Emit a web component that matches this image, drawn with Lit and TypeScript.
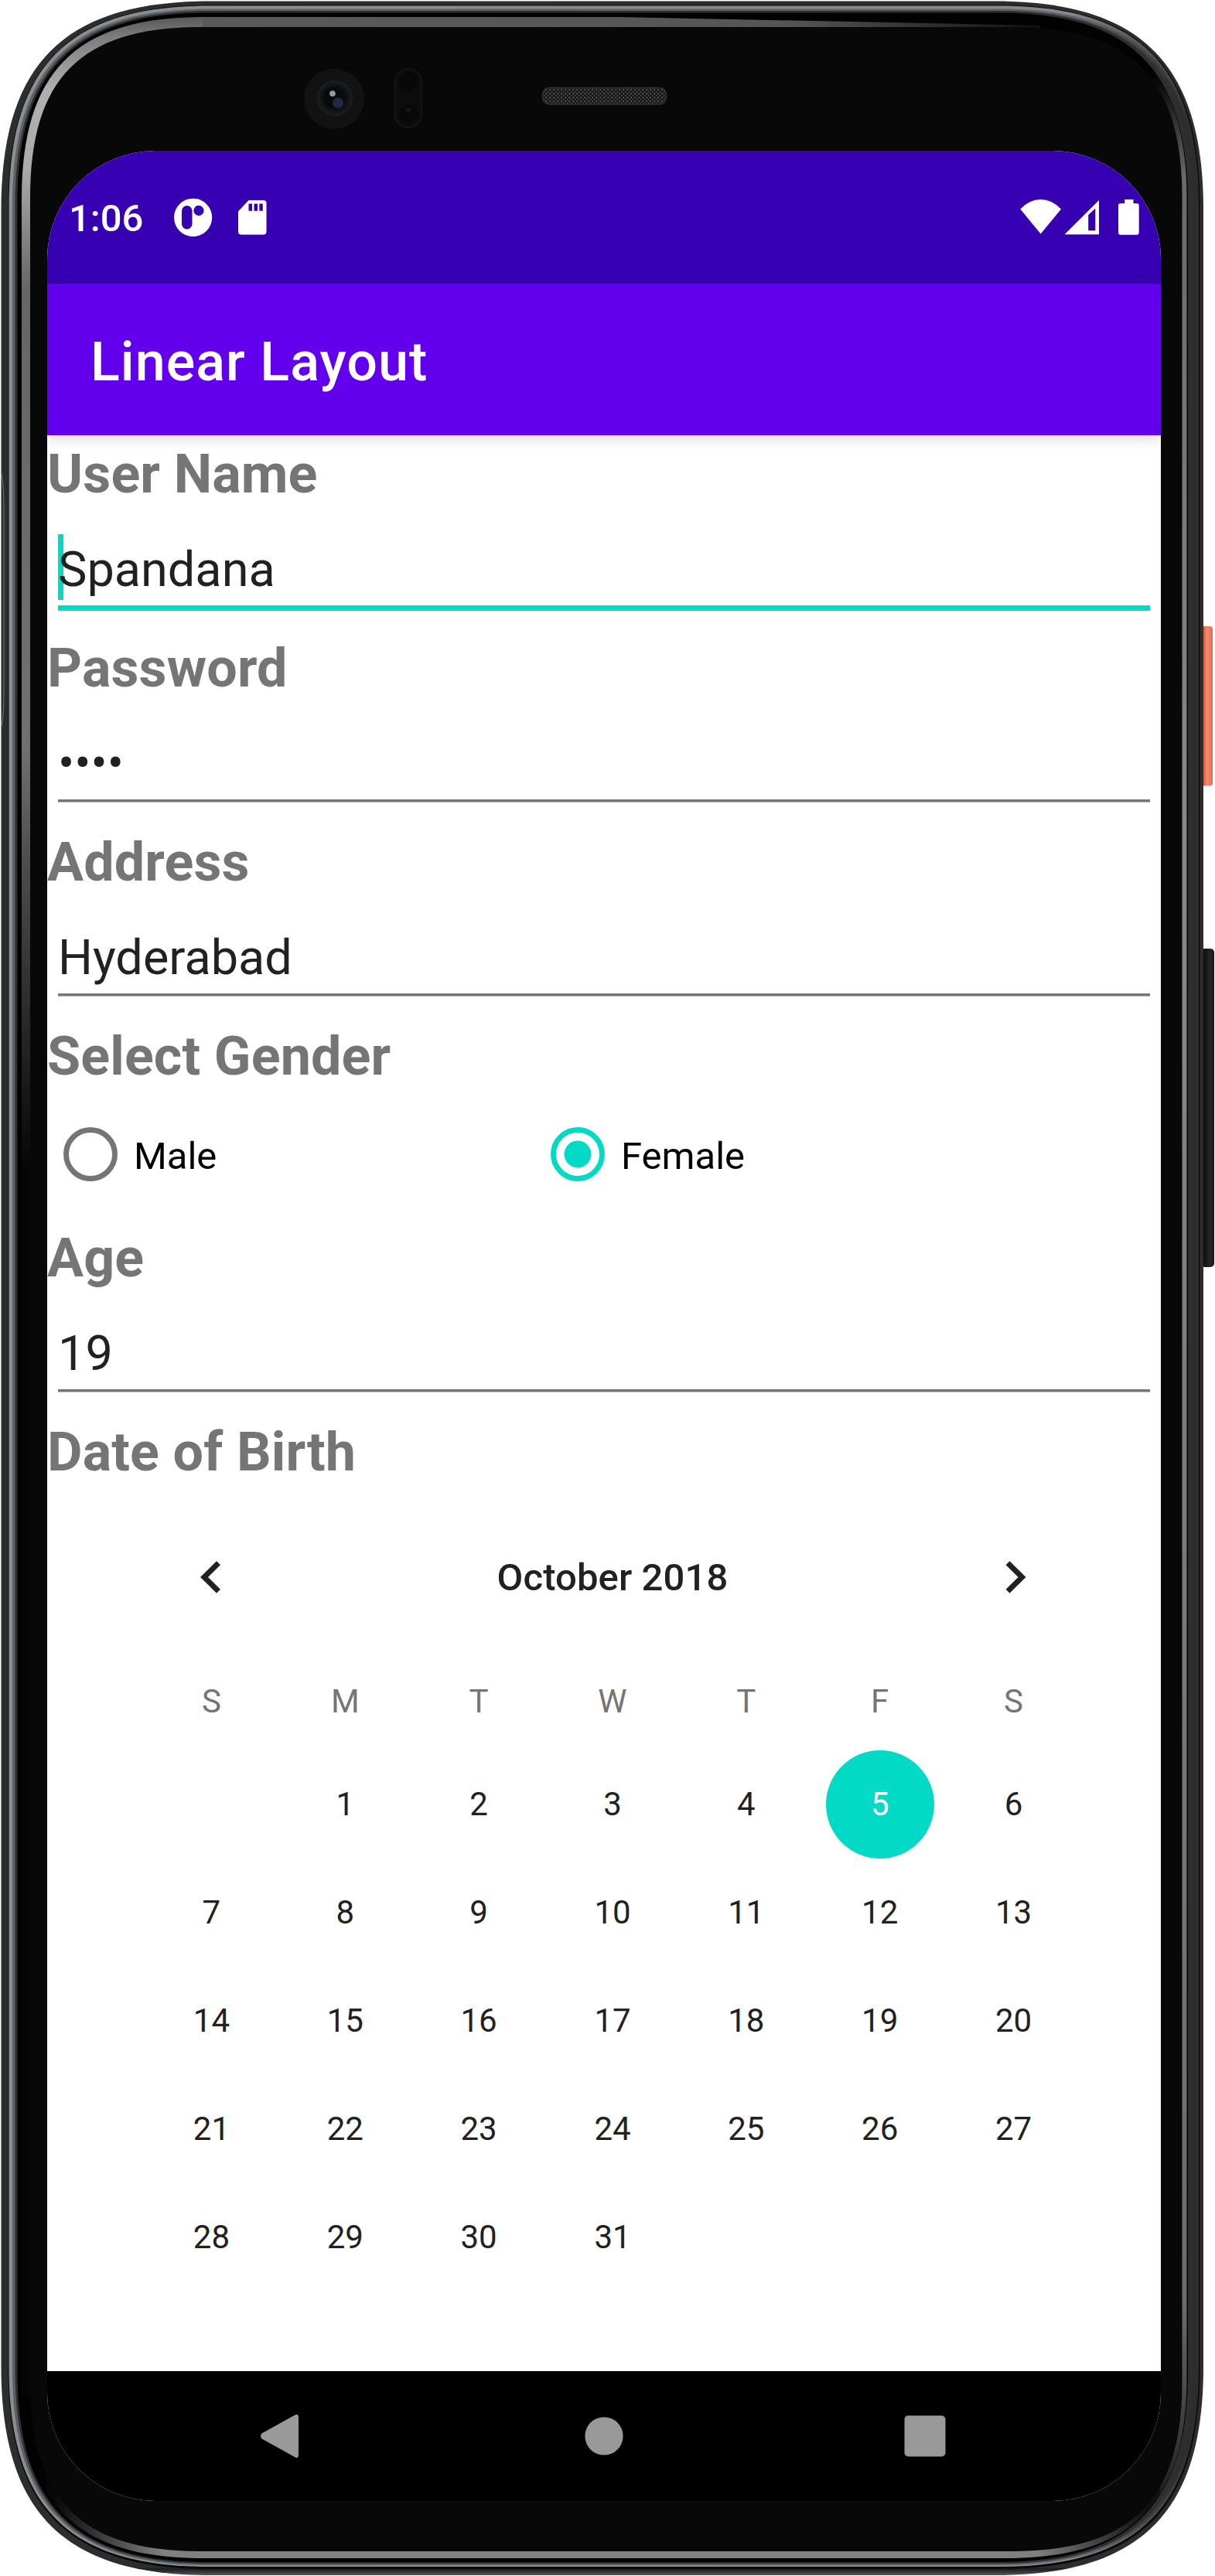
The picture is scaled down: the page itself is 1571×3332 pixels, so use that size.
import { LitElement, html, css, svg } from "lit";
import { customElement, property } from "lit/decorators.js";
import { classMap } from "lit/directives/class-map.js";

/** Closed outline with soft, continuously curved corners of length l. */
function softRect(x0: number, y0: number, x1: number, y1: number, l: number): string {
  const c = l * 0.3;
  return (
    `M${x0} ${y0 + l}C${x0} ${y0 + c} ${x0 + c} ${y0} ${x0 + l} ${y0}` +
    `H${x1 - l}C${x1 - c} ${y0} ${x1} ${y0 + c} ${x1} ${y0 + l}` +
    `V${y1 - l}C${x1} ${y1 - c} ${x1 - c} ${y1} ${x1 - l} ${y1}` +
    `H${x0 + l}C${x0 + c} ${y1} ${x0} ${y1 - c} ${x0} ${y1 - l}Z`
  );
}

@customElement("device-frame")
class DeviceFrame extends LitElement {
  static styles = css`
    :host { display: block; }
    svg { display: block; }
  `;
  render() {
    const glass = softRect(28, 22, 1534.5, 3309, 235);
    return html`<svg width="1571" height="3332" viewBox="0 0 1571 3332">
      <defs>
        <linearGradient id="body" x1="0" y1="3321" x2="0" y2="3331" gradientUnits="userSpaceOnUse">
          <stop offset="0" stop-color="#2c2d2d" /><stop offset="0.2" stop-color="#1c1c1c" /><stop offset="1" stop-color="#585858" />
        </linearGradient>
        <linearGradient id="rim" x1="0" y1="0" x2="1571" y2="0" gradientUnits="userSpaceOnUse">
          <stop offset="0" stop-color="#8b8e93" /><stop offset="0.88" stop-color="#85878c" />
          <stop offset="0.95" stop-color="#4a4c4f" /><stop offset="0.98" stop-color="#2b2d2f" />
        </linearGradient>
        <linearGradient id="rim2" x1="0" y1="0" x2="1571" y2="0" gradientUnits="userSpaceOnUse">
          <stop offset="0" stop-color="#5d6064" /><stop offset="0.9" stop-color="#5d6064" /><stop offset="0.97" stop-color="#2b2d2f" />
        </linearGradient>
        <linearGradient id="hl" x1="0" y1="0" x2="0" y2="1560" gradientUnits="userSpaceOnUse">
          <stop offset="0.014" stop-color="#585858" /><stop offset="0.03" stop-color="#7c7c7c" /><stop offset="0.075" stop-color="#b0b0b0" />
          <stop offset="0.14" stop-color="#aaa" /><stop offset="0.24" stop-color="#666" /><stop offset="0.62" stop-color="#707070" />
          <stop offset="0.72" stop-color="#4c4c4c" /><stop offset="0.97" stop-color="#060606" />
        </linearGradient>
        <linearGradient id="ht" x1="260" y1="0" x2="1345" y2="0" gradientUnits="userSpaceOnUse">
          <stop offset="0" stop-color="#5a5a5a" /><stop offset="0.7" stop-color="#555" /><stop offset="1" stop-color="#111" />
        </linearGradient>
        <linearGradient id="hr" x1="0" y1="100" x2="0" y2="3300" gradientUnits="userSpaceOnUse">
          <stop offset="0" stop-color="#050505" /><stop offset="0.04" stop-color="#6a6a6a" /><stop offset="0.3" stop-color="#888" />
          <stop offset="0.9" stop-color="#6c6c6c" /><stop offset="0.96" stop-color="#333" /><stop offset="0.985" stop-color="#111" />
        </linearGradient>
        <linearGradient id="hb" x1="70" y1="0" x2="1480" y2="0" gradientUnits="userSpaceOnUse">
          <stop offset="0" stop-color="#070708" /><stop offset="0.1" stop-color="#808080" /><stop offset="0.9" stop-color="#808080" />
          <stop offset="1" stop-color="#111" />
        </linearGradient>
        <linearGradient id="power" x1="1556" y1="0" x2="1568" y2="0" gradientUnits="userSpaceOnUse">
          <stop offset="0" stop-color="#d9573c" /><stop offset="0.35" stop-color="#f08a70" /><stop offset="0.7" stop-color="#ee7d62" /><stop offset="1" stop-color="#e2654a" />
        </linearGradient>
        <linearGradient id="volume" x1="1556" y1="0" x2="1570" y2="0" gradientUnits="userSpaceOnUse">
          <stop offset="0" stop-color="#0d0d0d" /><stop offset="0.6" stop-color="#262626" /><stop offset="1" stop-color="#151515" />
        </linearGradient>
        <radialGradient id="lens"><stop offset="0" stop-color="#07080c" /><stop offset="0.6" stop-color="#0b0c10" /><stop offset="1" stop-color="#1f1f20" /></radialGradient>
        <pattern id="mesh" width="5" height="5" patternUnits="userSpaceOnUse">
          <rect width="5" height="5" fill="#161616" /><circle cx="1.2" cy="1.2" r="1.1" fill="#5a5a5a" /><circle cx="3.7" cy="3.7" r="1.1" fill="#484848" />
        </pattern>
        <clipPath id="cl"><path d="M0 0H262V3100H0Z" /></clipPath>
        <clipPath id="ctt"><path d="M262 20H700L1345 33V60H262Z" /></clipPath>
        <clipPath id="cr"><path d="M1345 100H1571V3236H1345Z" /></clipPath>
        <clipPath id="cb"><path d="M60 3200H1500V3332H60Z" /></clipPath>
      </defs>
      <rect x="1553" y="810" width="15" height="206.5" rx="4" fill="url(#power)" />
      <rect x="1553" y="1227" width="17" height="412" rx="5" fill="url(#volume)" />
      <path d=${softRect(1.5, 1.5, 1556, 3331, 270)} fill="url(#body)" />
      <path d=${softRect(10.5, 6.5, 1551.5, 3323, 260)} fill="#0a0a0a" />
      <path d=${softRect(11.5, 7.5, 1550, 3320, 258)} fill="url(#rim)" />
      <path d=${softRect(16, 11.5, 1546, 3318, 253)} fill="url(#rim2)" />
      <path d=${softRect(19.5, 14, 1542, 3316, 250)} fill="#2d2f31" />
      <path d=${softRect(22.5, 16.5, 1536, 3314, 246)} fill="#020202" />
      <g clip-path="url(#cl)"><path d=${glass} fill="url(#hl)" /></g>
      <g clip-path="url(#ctt)"><path d=${glass} fill="url(#ht)" /></g>
      <g clip-path="url(#cr)"><path d=${glass} fill="url(#hr)" /></g>
      <g clip-path="url(#cb)"><path d=${glass} fill="url(#hb)" /></g>
      <path d=${softRect(39, 35, 1528.5, 3300, 220)} fill="#080809" />
      <path d="M2 612Q5 630 5 660V890Q5 925 2 940" fill="none" stroke="#77797b" stroke-width="1" />
      <circle cx="432" cy="128" r="39" fill="#111213" />
      <circle cx="433" cy="127" r="23" fill="url(#lens)" />
      <circle cx="432" cy="126" r="13" fill="#08090d" />
      <circle cx="437" cy="133" r="7" fill="#1f2845" />
      <circle cx="430" cy="121" r="3.8" fill="#9a9a9f" />
      <rect x="511" y="89" width="34" height="76" rx="17" fill="#0c0c0d" stroke="#141415" stroke-width="2" />
      <circle cx="528" cy="105" r="12" fill="#080809" /><circle cx="528" cy="147" r="12" fill="#080809" />
      <circle cx="528" cy="143" r="3.5" fill="#151516" />
      <rect x="701.5" y="113.5" width="160" height="21.5" rx="9" fill="url(#mesh)" stroke="#303030" stroke-width="1.5" />
    </svg>`;
  }
}

@customElement("status-bar")
class StatusBar extends LitElement {
  static styles = css`
    :host {
      display: flex; align-items: center; justify-content: space-between; box-sizing: border-box;
      height: 172px; padding: 0 28px 0 28px; background: #3700b3; color: #fff;
      font: 500 49px/172px Roboto, sans-serif;
    }
    .side { display: flex; align-items: center; height: 172px; }
    .time { width: 136px; padding-top: 4px; }
    svg { display: block; fill: #fff; }
  `;
  render() {
    return html`<div class="side">
        <span class="time">1:06</span>
        <svg width="120" height="50" viewBox="225 256 120 50">
          <circle cx="249.6" cy="281.3" r="24.6" />
          <rect x="235" y="266" width="13.5" height="30.6" rx="6.75" fill="#3700b3" />
          <circle cx="257" cy="272.3" r="6.6" fill="#3700b3" />
          <path fill-rule="evenodd" d="M321.5 259H340.5A4 4 0 0 1 344.5 263V299.500A4 4 0 0 1 340.500 303.500H312A4 4 0 0 1 308 299.500V273.500ZM321.500 263.600V272.800H326V263.600ZM328.500 263.600V272.800H333V263.600ZM335.300 263.600V272.800H339.800V263.600Z" />
        </svg>
      </div>
      <div class="side">
        <svg width="154" height="50" viewBox="1319 256 154 50">
          <path d="M1319.300 270.500Q1331 258 1345.600 258T1372 270.500L1345.600 302.500Z" />
          <path fill-rule="evenodd" d="M1376.500 303.200L1421 259V303.200ZM1407.200 278V298.300H1416.300V269.500Z" />
          <path d="M1454.200 258H1465.500V263H1469.700A3 3 0 0 1 1472.700 266V300.800A3 3 0 0 1 1469.700 303.800H1449A3 3 0 0 1 1446 300.800V266A3 3 0 0 1 1449 263H1454.200Z" />
        </svg>
      </div>`;
  }
}

@customElement("text-field")
class TextField extends LitElement {
  @property() label = "";
  @property() value = "";
  @property({ type: Boolean }) focused = false;
  static styles = css`
    :host { display: block; font-family: Roboto, sans-serif; }
    .label { height: 93px; font-size: 70px; font-weight: 700; line-height: 100px; letter-spacing: 0.15px; color: #757575; }
    .edit { height: 158px; padding: 0 14px; box-sizing: border-box; }
    .value { position: relative; height: 127px; font-size: 63px; line-height: 161px; color: #212121; }
    .text { position: relative; }
    .line { height: 4px; background: linear-gradient(#757575 3px, #b5b5b5 3px); }
    .line.on { height: 7px; background: #03dac5; }
    .cursor { position: absolute; left: 0; top: 35px; width: 7px; height: 85px; background: #03dac5; }
  `;
  render() {
    return html`<div class="label">${this.label}</div>
      <div class="edit">
        <div class="value">
          ${this.focused ? html`<div class="cursor"></div>` : ""}
          <span class="text">${this.value}</span>
        </div>
        <div class=${classMap({ line: true, on: this.focused })}></div>
      </div>`;
  }
}

@customElement("gender-picker")
class GenderPicker extends LitElement {
  static styles = css`
    :host { display: block; font-family: Roboto, sans-serif; }
    .label { height: 93px; font-size: 70px; font-weight: 700; line-height: 100px; letter-spacing: 0.15px; color: #757575; }
    .row { display: flex; height: 168px; }
    .option { display: flex; align-items: center; width: 630px; font-size: 49px; line-height: 57px; color: #000; }
    .option span { padding-top: 4px; }
    svg { display: block; width: 112px; height: 112px; fill: none; stroke: #757575; stroke-width: 7; }
    svg.on { stroke: #03dac5; }
    .dot { fill: #03dac5; stroke: none; }
  `;
  private option(name: string, on: boolean) {
    return html`<div class="option">
      <svg class=${classMap({ on })} viewBox="0 0 112 112">
        <circle cx="56" cy="56" r="31.500" />
        ${on ? svg`<circle class="dot" cx="56" cy="56" r="17.5" />` : ""}
      </svg>
      <span>${name}</span>
    </div>`;
  }
  render() {
    return html`<div class="label">Select Gender</div>
      <div class="row">${this.option("Male", false)}${this.option("Female", true)}</div>`;
  }
}

@customElement("month-calendar")
class MonthCalendar extends LitElement {
  static styles = css`
    :host { display: block; width: 1210px; margin-left: 126px; font-family: Roboto, sans-serif; color: #212121; }
    .head { display: grid; grid-template-columns: 169px 1fr 169px; align-items: center; justify-items: center; height: 238px; }
    .title { font-size: 49px; font-weight: 500; line-height: 57px; letter-spacing: 0.1px; }
    svg { display: block; width: 28px; height: 42px; fill: none; stroke: #212121; stroke-width: 7; }
    .week, .days { display: grid; grid-template-columns: repeat(7, 1fr); justify-items: center; text-align: center; font-size: 42px; }
    .week { height: 105px; line-height: 83px; color: #757575; }
    .days { grid-auto-rows: 140px; line-height: 140px; }
    .day { width: 140px; height: 140px; border-radius: 50%; }
    .day.on { background: #03dac5; color: #fff; }
    .day.first { grid-column: 2; }
  `;
  render() {
    const days = Array.from({ length: 31 }, (_, i) => i + 1);
    return html`<div class="head">
        <svg viewBox="0 0 28 42"><path d="M24.500 2.800L6 21L24.500 39.200" /></svg>
        <div class="title">October 2018</div>
        <svg viewBox="0 0 28 42"><path d="M4 2.800L22.500 21L4 39.200" /></svg>
      </div>
      <div class="week">${["S", "M", "T", "W", "T", "F", "S"].map((d) => html`<span>${d}</span>`)}</div>
      <div class="days">
        ${days.map((d) => html`<div class=${classMap({ day: true, on: d === 5, first: d === 1 })}>${d}</div>`)}
      </div>`;
  }
}

@customElement("nav-bar")
class NavBar extends LitElement {
  static styles = css`
    :host { display: block; height: 168px; background: #000; }
    svg { display: block; fill: #999; }
  `;
  render() {
    return html`<svg width="1440" height="168" viewBox="61 3067 1440 168">
      <path d="M380 3124.500Q386 3120.500 386 3127V3175Q386 3181.500 380 3177.500L338.500 3154.500Q335.500 3151 338.500 3147.500Z" />
      <circle cx="781" cy="3151" r="24.600" />
      <rect x="1169.500" y="3124.500" width="53" height="53" rx="5" />
    </svg>`;
  }
}

@customElement("app-root")
class AppRoot extends LitElement {
  static styles = css`
    :host {
      display: block; position: relative; box-sizing: border-box; width: 1571px; height: 3332px;
      padding: 195px 70px 97px 61px; background: #fff; font-family: Roboto, sans-serif; overflow: hidden;
    }
    .frame { position: absolute; left: 0; top: 0; }
    .screen { position: relative; display: flex; flex-direction: column; width: 1440px; height: 3040px; border-radius: 140px; overflow: hidden; background: #fff; }
    .appbar { flex: none; height: 196px; box-sizing: border-box; padding: 0 56px; background: #6200ee; color: #fff; font-size: 70px; font-weight: 500; line-height: 202px; letter-spacing: 1.05px; box-shadow: 0 4px 16px rgba(0, 0, 0, 0.16); }
    .content { flex: 1; min-height: 0; }
    .label { height: 93px; font-size: 70px; font-weight: 700; line-height: 100px; letter-spacing: 0.15px; color: #757575; }
  `;
  render() {
    return html`<device-frame class="frame"></device-frame>
      <div class="screen">
        <status-bar></status-bar>
        <div class="appbar">Linear Layout</div>
        <div class="content">
          <text-field label="User Name" value="Spandana" focused></text-field>
          <text-field label="Password" value="••••"></text-field>
          <text-field label="Address" value="Hyderabad"></text-field>
          <gender-picker></gender-picker>
          <text-field label="Age" value="19"></text-field>
          <div class="label">Date of Birth</div>
          <month-calendar></month-calendar>
        </div>
        <nav-bar></nav-bar>
      </div>`;
  }
}
